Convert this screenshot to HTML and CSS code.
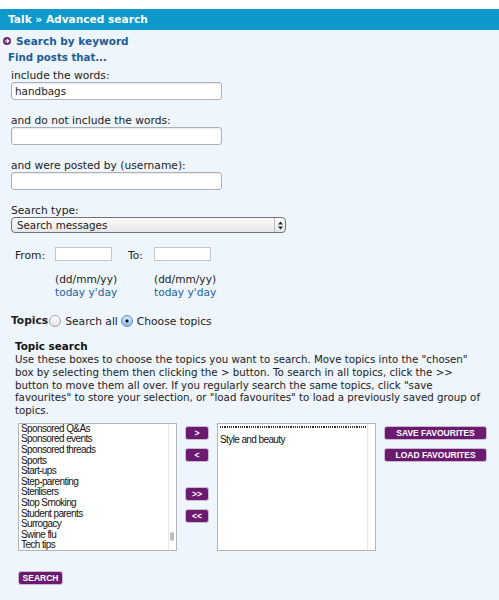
FILE: index.html
```html
<!DOCTYPE html>
<html>
<head>
<meta charset="utf-8">
<link rel="stylesheet" href="styles.css">
</head>
<body>
<div class="top"></div>
<div class="page">
  <div class="hdr">Talk » Advanced search</div>
  <div class="kw">
    <svg class="kw-ico" width="8" height="8" viewBox="0 0 8 8"><circle cx="4" cy="4" r="4" fill="#6b2a72"/><path d="M1.8 4h3.6M3.9 2.2l1.8 1.8-1.8 1.8" stroke="#fff" stroke-width="1.2" fill="none"/></svg>
    <span>Search by keyword</span>
  </div>
  <div class="find">Find posts that...</div>
  <div class="field first">
    <label class="lbl">include the words:</label>
    <div class="txt">handbags</div>
  </div>
  <div class="field">
    <label class="lbl">and do not include the words:</label>
    <div class="txt"></div>
  </div>
  <div class="field">
    <label class="lbl">and were posted by (username):</label>
    <div class="txt"></div>
  </div>
  <div class="field">
    <label class="lbl">Search type:</label>
    <div class="sel"><span class="sel-v">Search messages</span>
      <span class="sel-a"><svg width="5" height="9" viewBox="0 0 5 9"><path d="M2.5 0.5L5 3.5H0z M2.5 8.5L5 5.5H0z" fill="#222"/></svg></span>
    </div>
  </div>
  <div class="dates">
    <div class="dcol c1">
      <div class="drow"><span class="dl">From:</span><div class="dbox"></div></div>
      <div class="dsub">(dd/mm/yy)</div>
      <div class="dlinks"><a>today</a> <a>y'day</a></div>
    </div>
    <div class="dcol c2">
      <div class="drow"><span class="dl">To:</span><div class="dbox"></div></div>
      <div class="dsub">(dd/mm/yy)</div>
      <div class="dlinks"><a>today</a> <a>y'day</a></div>
    </div>
  </div>
  <div class="topics">
    <b>Topics</b><span class="radio"></span><span class="rl">Search all</span><span class="radio on"></span><span class="rl">Choose topics</span>
  </div>
  <div class="ts">
    <div class="ts-h">Topic search</div>
    <p class="ts-p">Use these boxes to choose the topics you want to search. Move topics into the "chosen" box by selecting them then clicking the &gt; button. To search in all topics, click the &gt;&gt; button to move them all over. If you regularly search the same topics, click "save favourites" to store your selection, or "load favourites" to load a previously saved group of topics.</p>
  </div>
  <div class="pick">
    <div class="list left">
      <div class="items">
        <div>Sponsored Q&amp;As</div>
        <div>Sponsored events</div>
        <div>Sponsored threads</div>
        <div>Sports</div>
        <div>Start-ups</div>
        <div>Step-parenting</div>
        <div>Sterilisers</div>
        <div>Stop Smoking</div>
        <div>Student parents</div>
        <div>Surrogacy</div>
        <div>Swine flu</div>
        <div>Tech tips</div>
      </div>
      <div class="sb"><div class="thumb"></div></div>
    </div>
    <div class="mid">
      <div class="pair">
        <button class="btn sm">&gt;</button>
        <button class="btn sm">&lt;</button>
      </div>
      <div class="pair">
        <button class="btn sm">&gt;&gt;</button>
        <button class="btn sm">&lt;&lt;</button>
      </div>
    </div>
    <div class="list right">
      <div class="items">
        <div class="dots"></div>
        <div class="chosen">Style and beauty</div>
      </div>
      <div class="sb"></div>
    </div>
    <div class="fav">
      <button class="btn lg">SAVE FAVOURITES</button>
      <button class="btn lg">LOAD FAVOURITES</button>
    </div>
  </div>
  <div class="go"><button class="btn srch">SEARCH</button></div>
</div>
</body>
</html>
```
FILE: styles.css
```css
html, body { margin: 0; padding: 0; }
body { background: #fff; font-family: "DejaVu Sans", Verdana, sans-serif; font-size: 10.5px; color: #222; }
.top { height: 9px; background: #fff; }
.page { background: #eef5fc; height: 591px; overflow: hidden; }
.hdr { background: #0e99cc; color: #fff; font-weight: bold; font-size: 10.6px; height: 21px; line-height: 21px; padding-left: 8px; }
.kw { display: flex; align-items: center; gap: 5px; margin: 4px 0 0 3px; height: 14px; color: #1b5c98; font-weight: bold; font-size: 10.5px; }
.kw-ico { display: block; }
.find { margin: 3px 0 0 8px; color: #1b5c98; font-weight: bold; font-size: 10.2px; height: 14px; line-height: 14px; }
.field { margin: 14px 0 0 11px; display: flex; flex-direction: column; align-items: flex-start; }
.field.first { margin-top: 4px; }
.lbl { font-size: 10.7px; line-height: 13px; height: 13px; }
.txt { width: 206px; height: 16px; border: 1px solid #aab0b6; border-radius: 3px; background: #fff; font-size: 10.4px; line-height: 16px; padding-left: 3px; box-shadow: inset 0 1px 1px rgba(0,0,0,0.08); }
.sel { width: 273px; height: 14px; border: 1px solid #6f7377; border-radius: 4px; background: linear-gradient(#fdfdfd, #e6e6e6); display: flex; align-items: stretch; font-size: 10.3px; }
.sel-v { flex: 1; padding-left: 5px; line-height: 14px; }
.sel-a { width: 10px; border-left: 1px solid #b9bcbf; display: flex; align-items: center; justify-content: center; }
.sel-a svg { display: block; }
.dates { display: flex; margin: 14px 0 0 15px; }
.dcol { display: flex; flex-direction: column; }
.c1 { width: 113px; }
.drow { display: flex; align-items: flex-start; }
.dl { line-height: 14px; margin-top: 2px; font-size: 10.7px; }
.c1 .dl { width: 40px; }
.c2 .dl { width: 26px; }
.dbox { width: 55px; height: 12px; background: #fff; border: 1px solid #c3c7cb; }
.dsub, .dlinks { line-height: 12.5px; font-size: 10.6px; }
.c1 .dsub, .c1 .dlinks { margin-left: 40px; }
.c2 .dsub, .c2 .dlinks { margin-left: 26px; }
.dsub { margin-top: 10px; }
.dlinks a { color: #1a63a5; }
.topics { display: flex; align-items: center; margin: 15px 0 0 11px; height: 14px; font-size: 10.7px; }
.topics b { margin-right: 1px; }
.radio { width: 10px; height: 10px; border: 1px solid #9ea3a8; border-radius: 50%; background: linear-gradient(#fff, #e3e3e3); margin-top: 2px; }
.radio.on { border-color: #5b8cc0; background: radial-gradient(circle, #111 0 1.3px, transparent 1.8px), linear-gradient(#d6e8fa, #8ebde9); }
.rl { margin-left: 4px; position: relative; top: 1px; }
.rl + .radio { margin-left: 3px; }
.ts { margin: 13px 0 0 15px; }
.ts-h { font-weight: bold; font-size: 10.4px; line-height: 13px; color: #111; }
.ts-p { margin: 0; font-size: 10.25px; line-height: 12.75px; width: 474px; }
.pick { display: flex; align-items: flex-start; margin: 6px 0 0 18px; }
.list { width: 157px; height: 126px; border: 1px solid #b4b7ba; background: #fff; display: flex; font-family: "Liberation Sans", Arial, sans-serif; font-size: 10px; letter-spacing: -0.6px; color: #111; overflow: hidden; }
.items { flex: 1; padding-left: 2px; line-height: 10.6px; }
.sb { width: 7px; border-left: 1px solid #e6e6e6; position: relative; }
.sb .thumb { position: absolute; left: 1px; width: 4px; height: 9px; top: 108px; background: #bdbdbd; border-radius: 2px; }
.dots { height: 2px; margin: 2px 1px 0 0; background: repeating-linear-gradient(90deg, #333 0 1.2px, transparent 1.2px 2.2px); }
.chosen { margin-top: 7px; }
.mid { display: flex; flex-direction: column; gap: 25px; margin: 3px 8px 0 8px; }
.pair { display: flex; flex-direction: column; gap: 8px; }
.btn { display: block; background: #6b1a70; color: #fff; font-family: "Liberation Sans", Arial, sans-serif; font-weight: bold; font-size: 8.5px; border: 1px solid #cbb9cf; border-radius: 3px; padding: 0; height: 14px; line-height: 12px; cursor: pointer; }
.btn.sm { width: 24px; }
.fav { display: flex; flex-direction: column; gap: 8px; margin: 3px 0 0 8px; }
.btn.lg { width: 103px; }
.go { margin: 20px 0 0 18px; }
.btn.srch { width: 45px; height: 14px; }
```
